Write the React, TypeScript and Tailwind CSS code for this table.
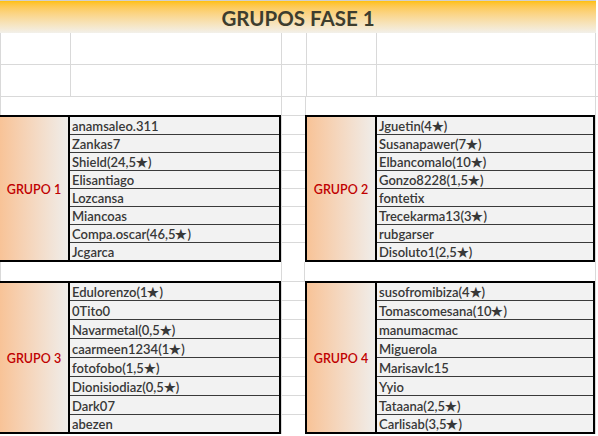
import React from "react";

type Group = {
  label: string;
  names: string[];
};

const groups: Group[] = [
  {
    label: "GRUPO 1",
    names: [
      "anamsaleo.311",
      "Zankas7",
      "Shield(24,5★)",
      "Elisantiago",
      "Lozcansa",
      "Miancoas",
      "Compa.oscar(46,5★)",
      "Jcgarca",
    ],
  },
  {
    label: "GRUPO 2",
    names: [
      "Jguetin(4★)",
      "Susanapawer(7★)",
      "Elbancomalo(10★)",
      "Gonzo8228(1,5★)",
      "fontetix",
      "Trecekarma13(3★)",
      "rubgarser",
      "Disoluto1(2,5★)",
    ],
  },
  {
    label: "GRUPO 3",
    names: [
      "Edulorenzo(1★)",
      "0Tito0",
      "Navarmetal(0,5★)",
      "caarmeen1234(1★)",
      "fotofobo(1,5★)",
      "Dionisiodiaz(0,5★)",
      "Dark07",
      "abezen",
    ],
  },
  {
    label: "GRUPO 4",
    names: [
      "susofromibiza(4★)",
      "Tomascomesana(10★)",
      "manumacmac",
      "Miguerola",
      "Marisavlc15",
      "Yyio",
      "Tataana(2,5★)",
      "Carlisab(3,5★)",
    ],
  },
];

// row heights, separator line included (except the first row)
const topRows = ["h-[17px]", "h-[18px]", "h-[18px]", "h-[18px]", "h-[18px]", "h-[18px]", "h-[18px]", "h-[18px]"];
const bottomRows = ["h-[17px]", "h-[19px]", "h-[19px]", "h-[19px]", "h-[19px]", "h-[19px]", "h-[19px]", "h-[18px]"];

function GroupTable({
  group,
  rows,
  className,
}: {
  group: Group;
  rows: string[];
  className: string;
}) {
  return (
    <div className={`flex border-black ${className}`}>
      <div className="flex w-[70px] shrink-0 items-center justify-center border-r-2 border-black bg-linear-to-r from-[#f8c397] to-[#efedea] pt-[4px]">
        <span className="text-[12.5px] font-semibold text-[#c00000]">{group.label}</span>
      </div>
      <div className="flex flex-1 flex-col bg-[#f2f2f2]">
        {group.names.map((name, i) => (
          <div
            key={name}
            className={`flex items-center pt-[2px] pl-[2px] text-[13px] leading-none font-semibold text-[#383838] ${rows[i]} ${
              i > 0 ? "border-t border-[#3a3a3a]" : ""
            }`}
          >
            {name}
          </div>
        ))}
      </div>
    </div>
  );
}

function GapColumn({ rows }: { rows: string[] }) {
  return (
    <div className="flex w-[24px] shrink-0 flex-col border-l border-[#d9d9d9]">
      <div className="h-[19px] border-t border-[#d9d9d9]" />
      {rows.slice(1).map((h, i) => (
        <div key={i} className={`border-t border-[#d9d9d9] ${h}`} />
      ))}
    </div>
  );
}

export default function App() {
  return (
    <div className="h-[436px] w-[598px] overflow-hidden bg-white font-['Lato','Noto_Sans',sans-serif]">
      {/* title bar */}
      <div className="flex h-[33px] w-[596px] justify-center border-t border-[#cfcfcf] bg-linear-to-b from-[#ffc000] to-[#f2f0ea] pt-[5px]">
        <h1 className="text-[20.5px] leading-[24px] font-bold text-[#3d3d2e]">GRUPOS FASE 1</h1>
      </div>

      {/* empty sheet rows */}
      <div className="grid h-[32px] grid-cols-[70px_211px_25px_70px_219px_3px] border-b border-[#d9d9d9]">
        <div className="border-l border-[#d9d9d9]" />
        <div className="border-l border-[#d9d9d9]" />
        <div className="border-l border-[#d9d9d9]" />
        <div className="border-l border-[#d9d9d9]" />
        <div className="border-l border-[#d9d9d9]" />
        <div className="border-l border-[#d9d9d9]" />
      </div>
      <div className="grid h-[32px] grid-cols-[70px_211px_25px_70px_219px_3px] border-b border-[#d9d9d9]">
        <div className="border-l border-[#d9d9d9]" />
        <div className="border-l border-[#d9d9d9]" />
        <div className="border-l border-[#d9d9d9]" />
        <div className="border-l border-[#d9d9d9]" />
        <div className="border-l border-[#d9d9d9]" />
        <div className="border-l border-[#d9d9d9]" />
      </div>
      <div className="grid h-[18px] grid-cols-[281px_24px_290px_3px]">
        <div className="border-l border-[#d9d9d9]" />
        <div className="border-l border-[#d9d9d9]" />
        <div className="border-l border-[#d9d9d9]" />
        <div className="border-l border-[#d9d9d9]" />
      </div>

      {/* groups 1 and 2 */}
      <div className="flex">
        <GroupTable group={groups[0]} rows={topRows} className="w-[281px] border-y-2 border-r-2" />
        <GapColumn rows={topRows} />
        <GroupTable group={groups[1]} rows={topRows} className="w-[290px] border-2" />
        <div className="w-[3px] border-l border-[#d9d9d9]" />
      </div>

      <div className="grid h-[19px] grid-cols-[281px_24px_290px_3px]">
        <div className="border-l border-[#d9d9d9]" />
        <div className="border-x border-[#d9d9d9]" />
        <div />
        <div className="border-l border-[#d9d9d9]" />
      </div>

      {/* groups 3 and 4 */}
      <div className="flex">
        <GroupTable group={groups[2]} rows={bottomRows} className="w-[281px] border-y-2 border-r-2" />
        <GapColumn rows={bottomRows} />
        <GroupTable group={groups[3]} rows={bottomRows} className="w-[290px] border-2" />
        <div className="w-[3px] border-l border-[#d9d9d9]" />
      </div>
    </div>
  );
}
